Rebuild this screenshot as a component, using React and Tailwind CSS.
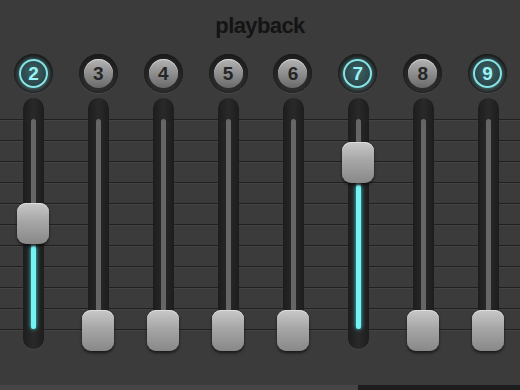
const channels = [
  { n: 2, on: true, pos: 105 },
  { n: 3, on: false, pos: 212 },
  { n: 4, on: false, pos: 212 },
  { n: 5, on: false, pos: 212 },
  { n: 6, on: false, pos: 212 },
  { n: 7, on: true, pos: 44 },
  { n: 8, on: false, pos: 212 },
  { n: 9, on: true, pos: 212 },
];

function Knob({ n, on }) {
  return (
    <div className="w-[39px] h-[39px] rounded-full bg-[linear-gradient(180deg,#1c1c1c,#2e2e2e)] shadow-[0_1px_0_#4a4a4a,inset_0_0_2px_#111] flex items-center justify-center">
      {on ? (
        <div className="w-[29px] h-[29px] rounded-full border-2 border-[#86e4e6] bg-[radial-gradient(circle_at_50%_45%,#3d6266,#243a3d)] shadow-[0_0_5px_rgba(110,230,235,0.55)] flex items-center justify-center text-[19px] font-bold text-[#9af3f5] leading-none">
          {n}
        </div>
      ) : (
        <div className="w-[29px] h-[29px] rounded-full bg-[linear-gradient(180deg,#b4b4b4,#8a8a8a_55%,#6a6a6a)] shadow-[inset_0_1px_0_#cfcfcf] flex items-center justify-center text-[19px] font-bold text-[#262626] leading-none">
          {n}
        </div>
      )}
    </div>
  );
}

function Fader({ pos }) {
  const grooveTop = 21;
  const fillStart = pos + 43 - grooveTop;
  const fillH = Math.max(0, 210 - fillStart);
  return (
    <div className="relative w-[21px] h-[251px] rounded-full bg-[linear-gradient(90deg,#1d1d1d,#292929_50%,#1d1d1d)] shadow-[0_1px_0_#464646] flex flex-col items-center pt-[21px]">
      <div className="w-[5px] h-[210px] rounded-full bg-[#666] flex flex-col justify-end">
        {fillH > 0 && (
          <div
            className="w-[5px] rounded-full bg-[#74f2f4] shadow-[0_0_4px_#3fd8de]"
            style={{ height: fillH }}
          />
        )}
      </div>
      <div
        className="absolute left-[-6px] w-[32px] h-[41px] rounded-[9px] bg-[linear-gradient(180deg,#c8c8c8,#a6a6a6_45%,#888)] shadow-[0_2px_3px_rgba(0,0,0,0.6),inset_0_1px_0_#dedede]"
        style={{ top: pos }}
      />
    </div>
  );
}

export default function App() {
  return (
    <div className="w-[520px] h-[390px] bg-[#3b3b3b] flex flex-col overflow-hidden font-['Liberation_Sans',Arial,sans-serif]">
      <div className="h-[50px] flex items-center justify-center">
        <span className="text-[22px] font-bold tracking-[-0.6px] text-[#141414]">playback</span>
      </div>

      <div className="mt-[4px] pl-[1px] flex">
        {channels.map((c) => (
          <div key={c.n} className="w-[65px] flex justify-center">
            <Knob n={c.n} on={c.on} />
          </div>
        ))}
      </div>

      <div className="mt-[5px] grid">
        <div className="[grid-area:1/1] pt-[21px] flex flex-col gap-[19px]">
          {Array.from({ length: 11 }).map((_, i) => (
            <div key={i} className="h-[2px] border-t border-[#202020] bg-[#434343]" />
          ))}
        </div>
        <div className="[grid-area:1/1] pl-[1px] flex">
          {channels.map((c) => (
            <div key={c.n} className="w-[65px] flex justify-center">
              <Fader pos={c.pos} />
            </div>
          ))}
        </div>
      </div>

      <div className="flex-1" />
      <div className="h-[5px] flex">
        <div className="w-[358px] bg-[#454545]" />
        <div className="flex-1 bg-[#1c1c1c]" />
      </div>
    </div>
  );
}
